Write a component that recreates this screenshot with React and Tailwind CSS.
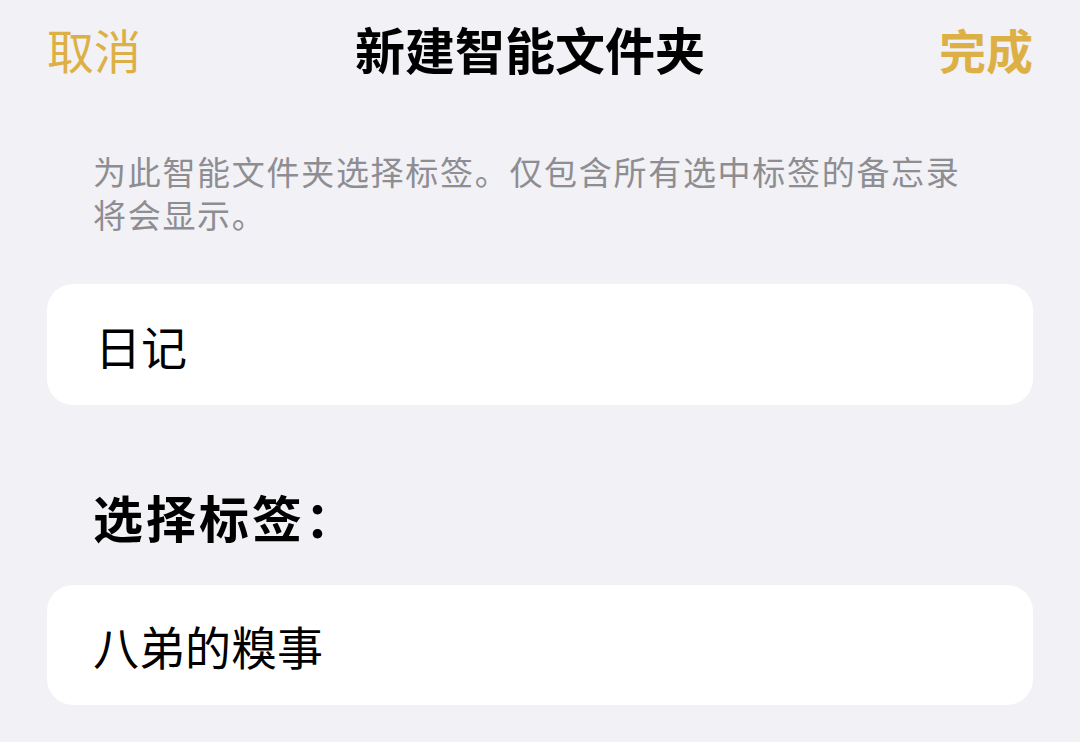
export default function App() {
  const font = { fontFamily: '"Noto Sans CJK SC", "Noto Sans", sans-serif' };
  return (
    <div
      className="w-[1080px] h-[742px] bg-[#f1f1f6] overflow-hidden flex flex-col"
      style={font}
    >
      <header className="h-[96px] px-[47px] grid grid-cols-[1fr_auto_1fr] items-center">
        <button className="justify-self-start text-[47px] leading-none text-[#ddb045] font-normal">
          取消
        </button>
        <h1 className="mr-[20px] text-[50px] leading-none font-bold text-black">
          新建智能文件夹
        </h1>
        <button className="justify-self-end text-[47px] leading-none text-[#ddb045] font-semibold">
          完成
        </button>
      </header>

      <div className="mt-[54px] px-[93px] text-[33px] leading-[43px] tracking-[1.7px] text-[#8d8d92]">
        <div>为此智能文件夹选择标签。仅包含所有选中标签的备忘录</div>
        <div>将会显示。</div>
      </div>

      <div className="mt-[48px] mx-[47px] h-[121px] rounded-[26px] bg-white flex items-center px-[48px]">
        <span className="text-[46px] leading-none text-black">日记</span>
      </div>

      <h2 className="mt-[86px] px-[93px] text-[50px] leading-none font-bold tracking-[3px] text-black">
        选择标签：
      </h2>

      <div className="mt-[44px] mx-[47px] h-[120px] rounded-[26px] bg-white flex items-center px-[46px]">
        <span className="text-[46px] leading-none text-black">八弟的糗事</span>
      </div>
    </div>
  );
}
